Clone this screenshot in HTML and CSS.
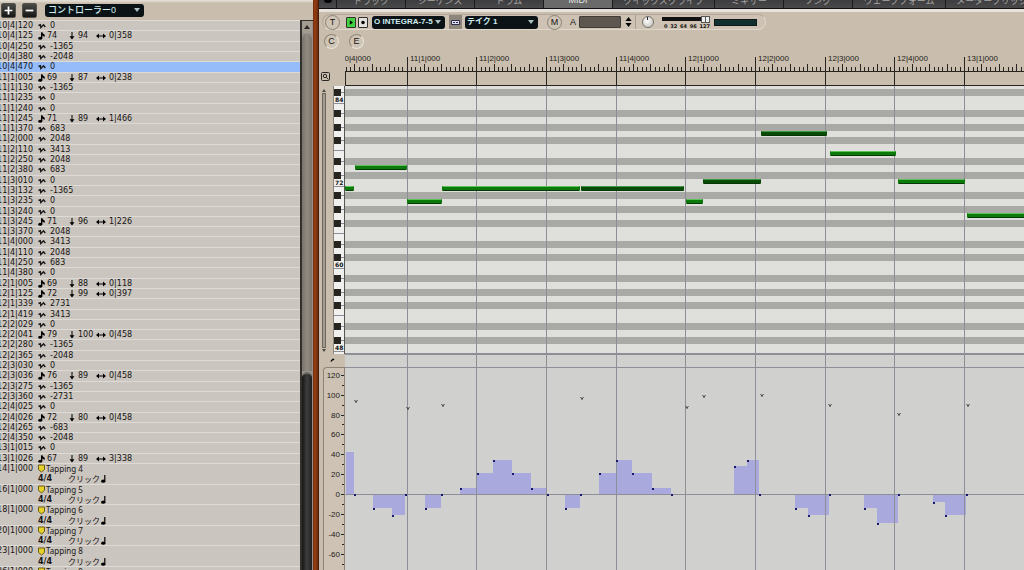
FILE: index.html
```html
<!DOCTYPE html>
<html lang="ja">
<head>
<meta charset="utf-8">
<title>MIDI Editor</title>
<link rel="stylesheet" href="styles.css">
</head>
<body>
<div class="app">
  <section class="events" aria-label="Event list">
    <header class="events-head">
      <button class="square" type="button" aria-label="Add"><svg viewBox="0 0 15 15"><path d="M7.500 3v9M3 7.500h9"/></svg></button>
      <button class="square" type="button" aria-label="Remove"><svg viewBox="0 0 15 15"><path d="M3 7.500h9"/></svg></button>
      <span class="picker picker-controller"><select aria-label="Controller"><option>コントローラー0</option></select></span>
    </header>
    <div class="events-body">
      <table class="event-table"><tbody id="events"></tbody></table>
      <div class="scroll">
        <button class="scroll-up" type="button" aria-label="Scroll up"></button>
        <div class="scroll-light"></div>
        <div class="scroll-dark"></div>
      </div>
    </div>
  </section>
  <div class="wood"></div>
  <main class="editor">
    <nav class="tabs">
      <button class="tab tab-edge" type="button" aria-label="Menu"><i></i></button>
      <button class="tab" type="button">トラック</button>
      <button class="tab" type="button">シーケンス</button>
      <button class="tab" type="button">ドラム</button>
      <button class="tab active" type="button">MIDI</button>
      <button class="tab tab-wide" type="button">クイックスクライブ</button>
      <button class="tab" type="button">ミキサー</button>
      <button class="tab" type="button">ソング</button>
      <button class="tab tab-mid" type="button">ウェーブフォーム</button>
      <button class="tab tab-mid" type="button">メーターブリッジ</button>
    </nav>
    <div class="tools">
      <div class="capsule">
        <button class="round" type="button">T</button>
        <span class="group transport">
          <button class="mini play" type="button" aria-label="Play"><svg viewBox="0 0 10 10"><path d="M3.500 2.200v5.600l4-2.800z"/></svg></button>
          <button class="mini" type="button" aria-label="Record"><svg viewBox="0 0 10 10"><circle cx="5" cy="5" r="2.200"/></svg></button>
        </span>
        <span class="picker"><select aria-label="Device"><option>O INTEGRA-7-5</option></select></span>
        <button class="link" type="button" aria-label="Take menu"><svg viewBox="0 0 13 13"><path d="M2.500 4.500h8v4h-8z" fill="#dcdcf2" stroke="#30304a"/><path d="M4 6.500h2M7 6.500h2" stroke="#30304a"/></svg></button>
        <span class="picker"><select aria-label="Take"><option>テイク 1</option></select></span>
        <button class="round round-m" type="button">M</button>
        <label class="field">A<input type="text" aria-label="Channel"></label>
        <button class="stepper" type="button" aria-label="Step"><svg viewBox="0 0 7 12"><path d="M.5 5L3.500 1l3 4zM.5 7l3 4 3-4z"/></svg></button>
        <i class="rule"></i>
        <button class="knob" type="button" aria-label="Level"></button>
        <div class="velocity">
          <input type="range" min="0" max="127" value="127" aria-label="Velocity">
          <span class="scale"><span>0</span><span>32</span><span>64</span><span>96</span><span>127</span></span>
        </div>
        <i class="meter"></i>
      </div>
      <div class="second">
        <button class="round" type="button">C</button>
        <button class="round" type="button">E</button>
      </div>
    </div>
    <div class="stage">
      <div class="corner"><button class="lens" type="button" aria-label="Zoom"><svg viewBox="0 0 9 9"><rect x=".5" y=".5" width="8" height="8" rx="1"/><circle cx="4" cy="4" r="1.700"/><path d="M5.300 5.300L7.500 7.500"/></svg></button></div>
      <svg class="ruler" id="ruler"></svg>
      <div class="keys">
        <div class="vscroll"><i class="up"></i><i class="bar"></i><i class="down"></i></div>
        <svg class="piano" id="piano"></svg>
      </div>
      <svg class="roll" id="roll"></svg>
      <div class="axis">
        <div class="notch"><svg viewBox="0 0 6 6"><path d="M1 5V3l2-2h2v1.500L3 3z"/></svg></div>
        <svg class="axis-box" id="axis"></svg>
      </div>
      <svg class="lane" id="lane"></svg>
    </div>
  </main>
</div>
<script src="app.js"></script>
</body>
</html>
```
FILE: styles.css
```css
* { box-sizing: border-box; }
html, body { height: 100%; }
body {
  margin: 0;
  overflow: hidden;
  background: #c9bead;
  color: #161412;
  font: 8px/10px "DejaVu Sans", "Noto Sans CJK JP", sans-serif;
}
button, select, input { font: inherit; color: inherit; margin: 0; padding: 0; border: 0; border-radius: 0; }
button { display: block; background: none; }
svg { display: block; overflow: hidden; }

.app { display: flex; height: 100vh; overflow: hidden; }

/* Event list */
.events { flex: 0 0 313px; display: flex; flex-direction: column; min-height: 0; }
.events-head {
  display: flex;
  align-items: center;
  gap: 6px;
  flex: 0 0 20px;
  padding-left: 1px;
  background: linear-gradient(#e2dbd1 0 1px, #c9bead 3px);
}
.square { width: 15px; height: 15px; border-radius: 2px; background: linear-gradient(#4a4a48, #161616); border: 1px solid #55524d; }
.square svg { width: 13px; height: 13px; stroke: #fff; stroke-width: 2; }
.picker { position: relative; display: block; width: 73px; height: 13px; }
.picker select {
  appearance: none;
  display: block;
  width: 100%;
  height: 100%;
  padding-left: 2px;
  border-radius: 3px;
  background: #0c1316;
  color: #cfeef2;
  font: bold 8px/12px "Liberation Sans", "Noto Sans CJK JP", sans-serif;
}
.picker::after {
  content: "";
  position: absolute;
  right: 4px;
  top: 4px;
  border: 3px solid transparent;
  border-top: 4px solid #a9c4c6;
  border-bottom: 0;
}
.events-head .picker-controller { width: 99px; margin-left: 2px; }
.picker-controller select { font-size: 9px; font-weight: 500; padding-left: 3px; }

.events-body { flex: 1; display: flex; min-height: 0; }
.event-table { display: block; flex: 1; background: #cbc5bf; overflow: hidden; }
.event-table tbody { display: block; }
.row { display: flex; align-items: center; height: 10px; border-top: 1px solid #dedad5; white-space: nowrap; }
.row:nth-child(10n+2), .row:nth-child(10n+5), .row:nth-child(10n+8) { height: 11px; }
.row.selected { background: #96bdfa; }
.row.beat { border-top-color: transparent; }
.row td { display: flex; align-items: center; padding: 0; height: 10px; }
.row .time { width: 33px; justify-content: flex-end; margin-right: 5px; }
.row svg { flex: none; }
.bend { gap: 4px; }
.pitch { gap: 1px; width: 31px; }
.vel { gap: 3px; min-width: 27px; padding-right: 3px; }
.dur { gap: 3px; }
.name { gap: 1px; font-family: "Noto Sans", sans-serif; }
.meterage { width: 30px; font-weight: bold; }
.click { gap: 1px; font-family: "Noto Sans CJK JP", sans-serif; }
.i8 { width: 8px; height: 8px; }
.i6 { width: 6px; height: 8px; }
.i10 { width: 10px; height: 8px; }
.i7 { width: 7px; height: 9px; }

.scroll { flex: 0 0 13px; display: flex; flex-direction: column; gap: 1px; border-left: 2px solid #34312d; border-top: 1px solid #34312d; background: #96918a; padding-right: 1px; }
.scroll-up { flex: 0 0 12px; display: flex; align-items: center; justify-content: center; background: #a39c91; }
.scroll-up::before { content: ""; border: 3px solid transparent; border-bottom: 4px solid #2b2926; border-top: 0; }
.scroll-light { flex: 340; border-radius: 5px 5px 0 0; background: linear-gradient(90deg, #77736b, #918b81 50%, #7b766e); }
.scroll-dark { flex: 197; border-radius: 5px 5px 0 0; border-top: 2px solid #6d6963; background: linear-gradient(90deg, #161616, #3d3d3d 50%, #202020); }
.wood { flex: 0 0 6px; background: linear-gradient(90deg, #6f2b0c, #953f14 30%, #7f320f 70%, #2a1208); }

/* Editor */
.editor { flex: 1; min-width: 0; display: flex; flex-direction: column; background: #c9bead; }
.tabs { flex: 0 0 12px; display: flex; min-width: 0; overflow: hidden; background: #3b3a3b; border-bottom: 3px solid #e7e3dc; box-shadow: inset 0 -1px #111; }
.tab { flex: 0 0 69px; display: flex; align-items: flex-end; justify-content: center; height: 8px; overflow: hidden; padding-bottom: 2px; border-right: 1px solid #1b1b1b; background: linear-gradient(#3e3d3f, #4a494a); color: #a9a8a7; font: 9px/10px "Liberation Sans", "Noto Sans CJK JP", sans-serif; white-space: nowrap; }
.tab.active { background: #6b6a6a; color: #e2e2e0; padding-bottom: 3px; }
.tab-edge { flex-basis: 18px; align-items: flex-start; }
.tab-edge i { width: 8px; height: 3px; border-radius: 0 0 4px 4px; background: #050505; }
.tab-wide { flex-basis: 102px; }
.tab-mid { flex-basis: 93px; }
.tab-mid:last-child { flex-grow: 1; }

.tools { flex: 0 0 44px; padding: 2px 0 0 3px; }
.capsule { display: flex; align-items: center; width: 444px; height: 16px; padding-left: 2px; border-radius: 8px; border: 1px solid #b3a999; border-bottom-color: #e0d8cb; border-right-color: #ded6c9; background: #cdc2b3; }
.round { flex: none; width: 15px; height: 15px; border-radius: 50%; border: 1px solid #8f8779; border-right-color: #ebe4d9; border-bottom-color: #ebe4d9; background: #cfc5b6; text-align: center; font: 9px/13px "Liberation Sans", sans-serif; }
.capsule .round { border-color: #8b8375; }
.group { display: flex; gap: 2px; }
.transport { margin: 0 4px 0 6px; }
.mini { width: 10px; height: 11px; border: 1px solid #33312d; background: #e3e1db; border-radius: 1px; }
.mini svg { width: 8px; height: 9px; }
.play { background: #43d141; }
.link { width: 13px; height: 14px; margin: 0 3px 0 4px; background: #8e857c; }
.link svg { width: 13px; height: 13px; fill: none; }
.capsule .round-m { margin-left: 9px; }
.field { display: flex; align-items: center; gap: 3px; margin-left: 8px; font: 9px/12px "Liberation Sans", sans-serif; }
.field input { width: 42px; height: 12px; background: #5d574f; border: 1px solid #403c36; border-radius: 1px; }
.stepper { width: 7px; margin: 0 3px 0 4px; }
.stepper svg { width: 7px; height: 12px; }
.rule { width: 1px; height: 14px; background: #a99f90; }
.knob { flex: none; width: 12px; height: 12px; margin: 0 8px 0 6px; border-radius: 50%; border: 1px solid #77716a; background: linear-gradient(90deg, transparent 4px, #222 4px 5px, transparent 5px) 0 0 / 10px 3px no-repeat, radial-gradient(circle at 40% 35%, #fff, #c9c8c5 80%); }
.velocity { width: 48px; display: flex; flex-direction: column; }
.velocity input { appearance: none; display: block; width: 100%; height: 7px; background: linear-gradient(transparent 1px, #111 1px 5px, transparent 5px); }
.velocity input::-webkit-slider-thumb { appearance: none; width: 9px; height: 7px; background: linear-gradient(90deg, #eee 3px, #555 3px 4px, #eee 4px); border: 1px solid #555; }
.scale { display: flex; justify-content: space-between; padding-left: 2px; font: bold 5px/6px "DejaVu Sans", sans-serif; }
.meter { width: 43px; height: 7px; margin-left: 4px; border: 1px solid #101818; background: #12302f; }
.second { display: flex; gap: 10px; padding: 4px 0 0 2px; }

.stage { flex: 1; min-height: 0; display: grid; grid-template: 30px 268px 1fr / 26px 1fr; }
.stage > svg { width: 100%; height: 100%; }
.corner { padding: 16px 0 0 2px; }
.lens { width: 9px; height: 9px; }
.lens svg { width: 9px; height: 9px; fill: none; stroke: #2b2824; }
.keys { display: flex; justify-content: space-between; padding-left: 2px; }
.vscroll { display: flex; flex-direction: column; align-items: center; gap: 1px; width: 5px; padding: 3px 0 2px; }
.vscroll .bar { flex: 1; width: 4px; border: 1px solid #6d675e; background: #a39b8f; }
.up { border: 2px solid transparent; border-bottom: 3px solid #4d483f; border-top: 0; }
.down { border: 2px solid transparent; border-top: 3px solid #4d483f; border-bottom: 0; }
.piano { width: 12px; height: 268px; background: #f0f0ee; border-right: 1px solid #555; border-left: 1px solid #8c867d; }
.roll { background: #dfe0dc; }
.lane { background: #d0d0ce; }
.axis { display: flex; flex-direction: column; padding-left: 4px; min-height: 0; overflow: hidden; }
.notch { flex: 0 0 13px; padding: 4px 0 0 7px; }
.notch svg { width: 5px; height: 5px; }
.axis-box { flex: 1; width: 22px; min-height: 0; border: 1px solid #8c8376; border-width: 1px 1px 0 1px; border-radius: 4px 0 0 0; background: #cdc2b3; }
.label { font: 8px "Liberation Sans", sans-serif; fill: #1c1a18; }
.key-label { font: bold 6px "DejaVu Sans", sans-serif; fill: #111; }
.ink { fill: #27241f; }
.grid { fill: #8e8e96; }
.dark-row { fill: #a9aaa6; }
.zone { fill: #a9a9dd; }
.dot { fill: #18186a; }
.mark { fill: none; stroke: #45403d; }
.note { fill: #0c7a0a; }
.note.strong { fill: #084c07; }
.note-top { fill: #5cc45a; }
.strong-top { fill: #3f9a40; }
.note-base { fill: #063a05; }
```
FILE: app.js
```js
const icons = {
  bend: '<svg class="i8" viewBox="0 0 8 8"><path d="M.5 3.500L2.300 2.800 2.800 5.500 5.500 2.700 7.300 5" fill="none" stroke="#1a1a1a" stroke-width="1.400"/></svg>',
  note: '<svg class="i8" viewBox="0 0 8 8"><ellipse cx="2.200" cy="6.200" rx="2" ry="1.500"/><path d="M3 6V.3h1.400Q5 2 6.500 2.600 7.500 3.700 6 5.500 6.200 3.700 4.400 3.400V6z"/></svg>',
  down: '<svg class="i6" viewBox="0 0 6 8"><path d="M2.500 0h1v4.300h2L3 7.500.5 4.300h2z"/></svg>',
  both: '<svg class="i10" viewBox="0 0 10 8"><path d="M0 4l3-2.500v2h4v-2L10 4 7 6.500v-2H3v2z"/></svg>',
  flag: '<svg class="i7" viewBox="0 0 7 9"><path d="M.5 1h6v4.500L3.500 8 .5 5.500z" fill="#e6d02a" stroke="#6a5d16"/></svg>',
  quarter: '<svg class="i6" viewBox="0 0 6 8"><ellipse cx="2.200" cy="6.200" rx="2.100" ry="1.600"/><path d="M3.200 0h1.200v6.500H3.200z"/></svg>'
};

const events = `10|4|120 0
10|4|125 74 94 0|358
10|4|250 -1365
10|4|380 -2048
10|4|470 0
11|1|005 69 87 0|238
11|1|130 -1365
11|1|235 0
11|1|240 0
11|1|245 71 89 1|466
11|1|370 683
11|2|000 2048
11|2|110 3413
11|2|250 2048
11|2|380 683
11|3|010 0
11|3|132 -1365
11|3|235 0
11|3|240 0
11|3|245 71 96 1|226
11|3|370 2048
11|4|000 3413
11|4|110 2048
11|4|250 683
11|4|380 0
12|1|005 69 88 0|118
12|1|125 72 99 0|397
12|1|339 2731
12|1|419 3413
12|2|029 0
12|2|041 79 100 0|458
12|2|280 -1365
12|2|365 -2048
12|3|030 0
12|3|036 76 89 0|458
12|3|275 -1365
12|3|360 -2731
12|4|025 0
12|4|026 72 80 0|458
12|4|265 -683
12|4|350 -2048
13|1|015 0
13|1|026 67 89 3|338`.split('\n').map(line => line.split(' '));

const markers = [['14|1|000', 4], ['16|1|000', 5], ['18|1|000', 6], ['20|1|000', 7], ['23|1|000', 8], ['26|1|000', 9]];

const cell = (name, body) => `<td class="${name}">${body}</td>`;
let rows = '';
events.forEach(([time, a, velocity, length], i) => {
  const body = velocity
    ? cell('pitch', icons.note + a) + cell('vel', icons.down + velocity) + cell('dur', icons.both + length)
    : cell('bend', icons.bend + a);
  rows += `<tr class="row${i === 4 ? ' selected' : ''}">${cell('time', time)}${body}</tr>`;
});
markers.forEach(([time, n]) => {
  rows += `<tr class="row">${cell('time', time)}${cell('name', icons.flag + 'Tapping ' + n)}</tr>`;
  rows += `<tr class="row beat">${cell('time', '')}${cell('meterage', '4/4')}${cell('click', 'クリック' + icons.quarter)}</tr>`;
});
document.getElementById('events').innerHTML = rows;

const rect = (name, x, y, w, h) => `<rect class="${name}" x="${x}" y="${y}" width="${w}" height="${h}"/>`;
const text = (name, x, y, s, anchor = 'start') => `<text class="${name}" x="${x}" y="${y}" text-anchor="${anchor}">${s}</text>`;

/* Time axis: one beat is BEAT wide, the first visible beat line is at FIRST */
const BEAT = 69.68;
const FIRST = 62.1;
const BEATS = 40;
const beatX = n => Math.floor(FIRST + BEAT * n);

let grid = '';
for (let n = 0; n < BEATS; n++) grid += rect('grid', beatX(n), 0, 1, '100%');

let ruler = rect('ink', 0, 15, '100%', 1) + rect('ink', 0, 29, '100%', 1) + rect('ink', 0, 15, 1, 15);
for (let n = -1; n < BEATS; n++) {
  const beat = n + 4;
  ruler += text('label', beatX(n) + 3, 5, `${10 + Math.floor(beat / 4)}|${beat % 4 + 1}|000`);
  ruler += rect('ink', beatX(n), 1, 1, 29);
  for (let s = 1; s < 16; s++) {
    const tall = s % 4 === 0;
    ruler += rect('ink', Math.floor(FIRST + BEAT * (n + s / 16)), tall ? 8 : 11, 1, tall ? 7 : 4);
  }
}
document.getElementById('ruler').innerHTML = ruler;

/* Pitch axis */
const pitchY = p => Math.round(6.4 + 6.87 * (85 - p));
let bands = rect('grid', 0, 267, '100%', 1);
let piano = '';
for (let p = 85; p >= 48; p--) {
  const y = pitchY(p);
  const step = p % 12;
  if ([1, 3, 6, 8, 10].includes(step)) {
    bands += rect('dark-row', 0, y - 3, '100%', 7);
    piano += rect('grid', 0, y, 11, 1) + rect('ink', 0, y - 3, 7, 7);
  }
  if (step === 5) piano += rect('grid', 0, y + 3, 11, 1);
  if (step === 0) piano += rect('grid', 0, y + 4, 11, 1) + text('key-label', 1, y + 3, p);
}
document.getElementById('piano').innerHTML = piano;

const notes = [[0, 9, 71], [10, 62, 74], [62, 97, 69], [97, 235, 71], [236, 339, 71, 1], [341, 358, 69], [358, 416, 72, 1],
  [416, 482, 79, 1], [485, 551, 76], [553, 620, 72], [622, 692, 67]];
let drawn = '';
notes.forEach(([from, to, p, strong]) => {
  const y = pitchY(p) - 3;
  const w = to - from;
  drawn += `<rect class="note${strong ? ' strong' : ''}" x="${from}" y="${y}" width="${w}" height="5" rx="1"/>`;
  drawn += rect(strong ? 'strong-top' : 'note-top', from + 1, y, w - 2, 1) + rect('note-base', from + 1, y + 4, w - 2, 1);
});
document.getElementById('roll').innerHTML = bands + grid + drawn;

/* Controller lane */
const ZERO = 140;
const zones = [[1, 9, 98], [28, 47, 154], [47, 60, 161], [80, 96, 154], [115, 132, 134], [132, 148, 119], [148, 167, 106],
  [167, 186, 119], [186, 202, 134], [220, 235, 154], [254, 271, 119], [271, 287, 106], [287, 307, 119], [307, 326, 134],
  [389, 402, 112], [402, 414, 106], [450, 463, 154], [463, 484, 161], [519, 532, 154], [532, 553, 169], [588, 600, 148], [600, 621, 161]];
const rests = [9, 60, 96, 202, 235, 326, 414, 484, 553, 621];
const marks = [[11, 48], [63, 55], [98, 52], [237, 45], [342, 54], [359, 43], [417, 42], [485, 52], [554, 61], [623, 52]];
let lane = '';
zones.forEach(([a, b, y]) => { lane += rect('zone', a, Math.min(y, ZERO), b - a, Math.abs(y - ZERO)); });
lane += grid + rect('grid', 0, 0, '100%', 1) + rect('grid', 0, 13, '100%', 1) + rect('grid', 0, ZERO, '100%', 1);
zones.slice(1).forEach(([a, b, y]) => { lane += rect('dot', a, y, 2, 2); });
rests.forEach(x => { lane += rect('dot', x, ZERO, 2, 2); });
marks.forEach(([x, y]) => { lane += `<path class="mark" d="M${x - 1.5} ${y - 2}l1.500 2 1.500-2M${x} ${y}v1"/>`; });
document.getElementById('lane').innerHTML = lane;

let axis = '';
for (let v = 120; v >= -80; v -= 10) {
  const at = Math.round(ZERO - 14 - v * 0.993);
  const labelled = v % 20 === 0;
  axis += rect('ink', labelled ? 17 : 18, at, labelled ? 4 : 3, 1);
  if (labelled) axis += text('label', 16, at + 3, v, 'end');
}
document.getElementById('axis').innerHTML = axis;
```
